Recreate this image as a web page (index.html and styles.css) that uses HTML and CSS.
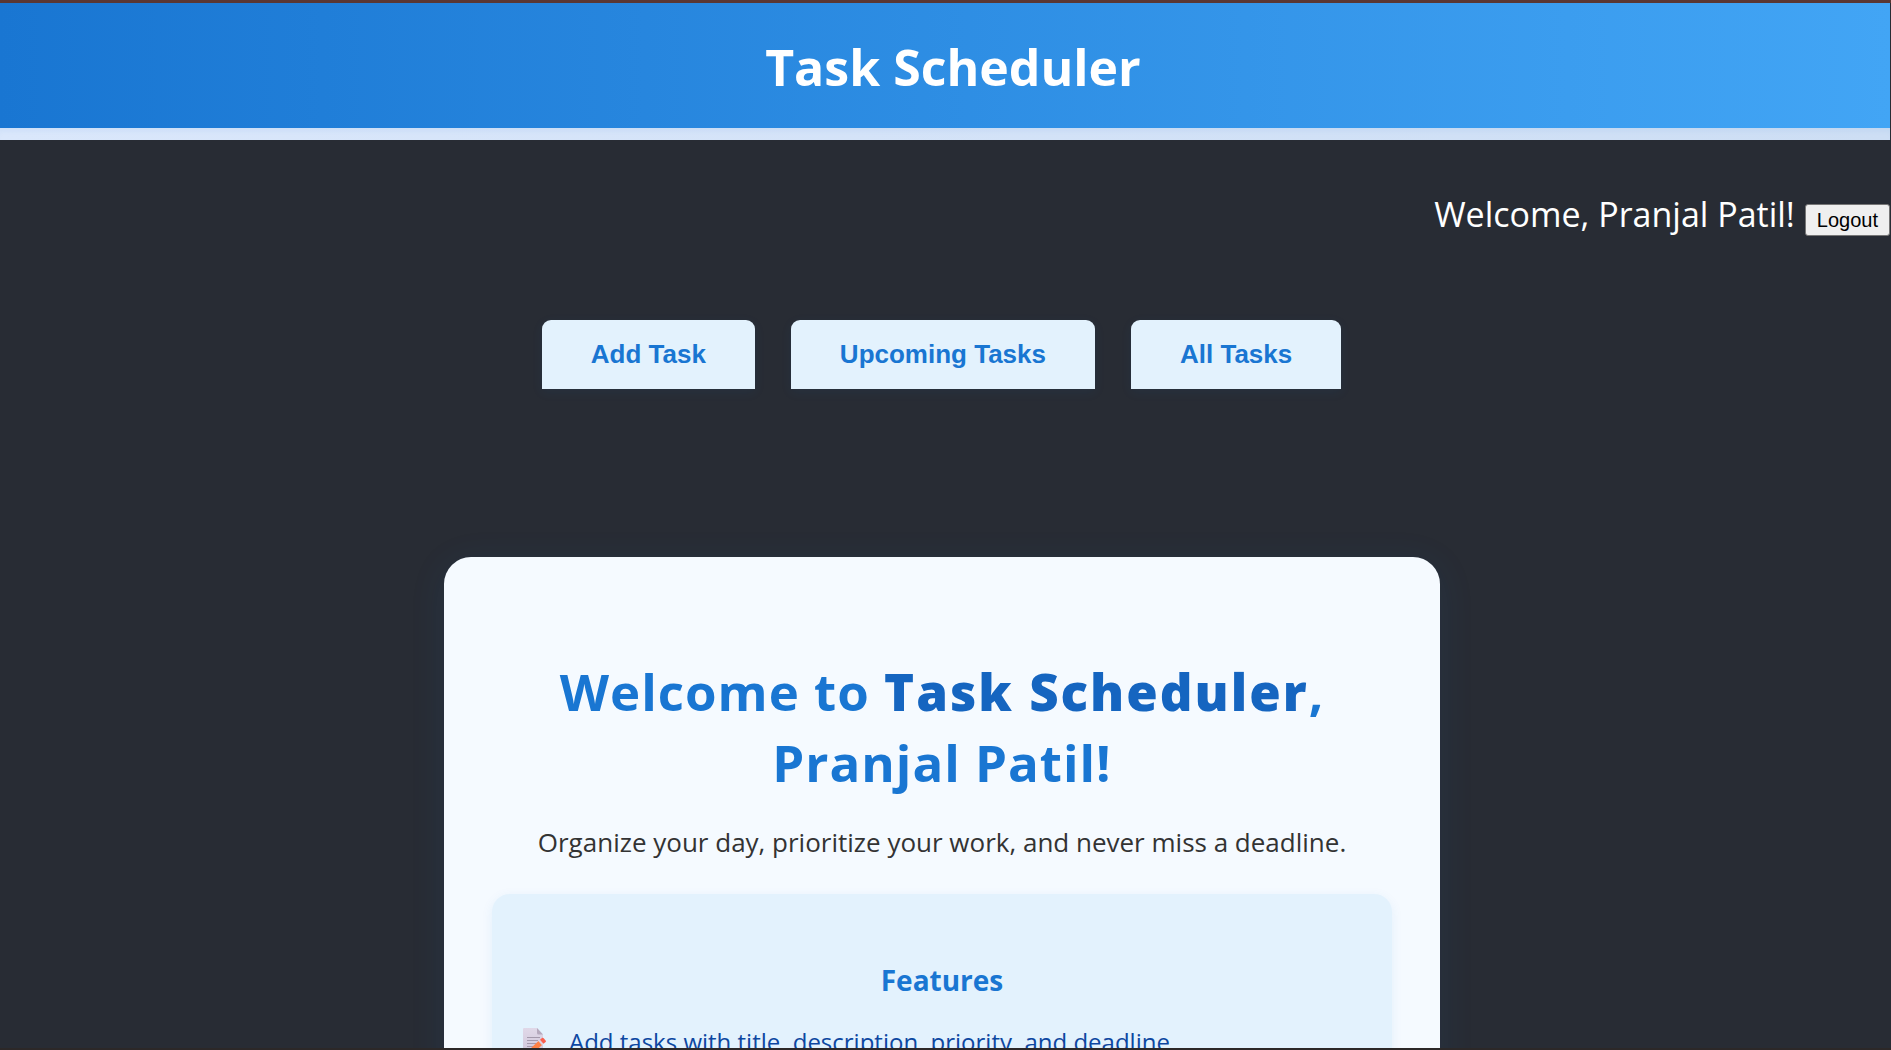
FILE: index.html
```html
<!DOCTYPE html>
<html lang="en">
<head>
<meta charset="utf-8">
<title>Task Scheduler</title>
<link rel="stylesheet" href="styles.css">
</head>
<body>
<div class="app">
  <header class="header">
    <h1 class="header-title">Task Scheduler</h1>
  </header>
  <div class="header-edge"></div>
  <div class="user-bar">
    <span>Welcome, Pranjal Patil!</span>
    <button class="logout" type="button">Logout</button>
  </div>
  <nav class="tabs">
    <button class="tab" type="button">Add Task</button>
    <button class="tab" type="button">Upcoming Tasks</button>
    <button class="tab" type="button">All Tasks</button>
  </nav>
  <main class="main">
    <section class="card">
      <h2 class="card-title">Welcome to <span class="brand">Task Scheduler</span>, Pranjal Patil!</h2>
      <p class="lead">Organize your day, prioritize your work, and never miss a deadline.</p>
      <div class="features">
        <h3 class="features-title">Features</h3>
        <ul class="feature-list">
          <li class="feature">
            <svg class="feature-icon" viewBox="0 0 24 28" aria-hidden="true">
              <defs>
                <linearGradient id="paper" x1="0" y1="0" x2="0" y2="1">
                  <stop offset="0" stop-color="#e0d8e8"/>
                  <stop offset="1" stop-color="#cfc5d8"/>
                </linearGradient>
              </defs>
              <path fill="url(#paper)" d="M0 1Q0 0 1 0H14L20 6.500V26.500Q20 28 18.500 28H1.500Q0 28 0 26.500Z"/>
              <path fill="#b5a9bd" d="M14 0L20 6.500H15.500Q14 6.500 14 5Z"/>
              <path stroke="#a499ac" stroke-width="1" d="M4 9.500H17M4 12.500H15M4 15.500H13M4 18.500H11M4 21.500H9"/>
              <path fill="#ff8145" d="M15.500 13L19 17L10.500 25L5.500 26.500L7 21Z"/>
              <path fill="#ded2e0" d="M15.500 13L17 11.800L20.500 15.700L19 17Z"/>
              <path fill="#f9604f" d="M17 11.800L19.300 9.800Q20 9.500 20.700 10.200L22.800 12.700Q23.300 13.500 22.600 14L20.500 15.700Z"/>
            </svg>
            <span>Add tasks with title, description, priority, and deadline</span>
          </li>
        </ul>
      </div>
    </section>
  </main>
</div>
</body>
</html>
```
FILE: styles.css
```css
* {
  box-sizing: border-box;
}

body {
  margin: 0;
  background: #282c34;
  font-family: "Open Sans", "Noto Sans", sans-serif;
  color: #ffffff;
}

h1, h2, h3, p, ul {
  margin: 0;
  padding: 0;
}

.app {
  height: 100vh;
  overflow: hidden;
  border-top: 3px solid #5a3733;
  border-bottom: 2px solid #2c2828;
}

.header {
  margin-right: 1px;
  padding: 30px 0 27px 16px;
  background: linear-gradient(90deg, #1976d2, #42a5f5);
  text-align: center;
}

.header-title {
  font-size: 50px;
  line-height: 68px;
}

.header-edge {
  height: 12px;
  margin-right: 1px;
  background: linear-gradient(90deg, #dae7fb, #cddef4);
  box-shadow: inset 0 6px 6px -4px rgba(25, 118, 210, 0.08);
}

.user-bar {
  display: flex;
  justify-content: flex-end;
  align-items: baseline;
  gap: 10px;
  padding: 49px 1px 0 0;
  font-size: 34px;
  line-height: 50px;
}

.logout {
  padding: 4px 11px;
  border: 1px solid #767676;
  border-radius: 3px;
  background: #efefef;
  color: #000000;
  font-family: "Liberation Sans", Arial, sans-serif;
  font-size: 20px;
  line-height: 22px;
}

.tabs {
  display: flex;
  justify-content: center;
  gap: 36px;
  padding: 81px 8px 0 0;
}

.tab {
  padding: 19px 49px 20px;
  border: 0;
  border-radius: 9px 9px 0 0;
  background: #e3f2fd;
  box-shadow: 0 3px 12px rgba(25, 118, 210, 0.08);
  color: #1976d2;
  font-family: "Liberation Sans", Arial, sans-serif;
  font-size: 26px;
  font-weight: 700;
  line-height: 30px;
}

.main {
  padding: 168px 7px 60px 0;
}

.card {
  max-width: 996px;
  margin: 0 auto;
  padding: 99px 48px 60px;
  border-radius: 27px;
  background: #f5faff;
  box-shadow: 0 6px 36px rgba(25, 118, 210, 0.1);
  text-align: center;
}

.card-title {
  color: #1976d2;
  font-size: 51px;
  line-height: 71px;
  letter-spacing: 1px;
}

.brand {
  color: #1565c0;
  font-weight: 800;
  letter-spacing: 2px;
}

.lead {
  margin-top: 24px;
  color: #333333;
  font-size: 26px;
  line-height: 40px;
}

.features {
  margin-top: 32px;
  padding: 64px 31px 40px;
  border-radius: 18px;
  background: #e3f2fd;
  box-shadow: 0 3px 12px rgba(25, 118, 210, 0.08);
}

.features-title {
  color: #1976d2;
  font-size: 28px;
  line-height: 44px;
}

.feature-list {
  margin-top: 20px;
  list-style: none;
  text-align: left;
}

.feature {
  display: flex;
  align-items: center;
  gap: 22px;
  color: #0d47a1;
  font-size: 24px;
  line-height: 40px;
}

.feature-icon {
  width: 24px;
  height: 28px;
}
```
